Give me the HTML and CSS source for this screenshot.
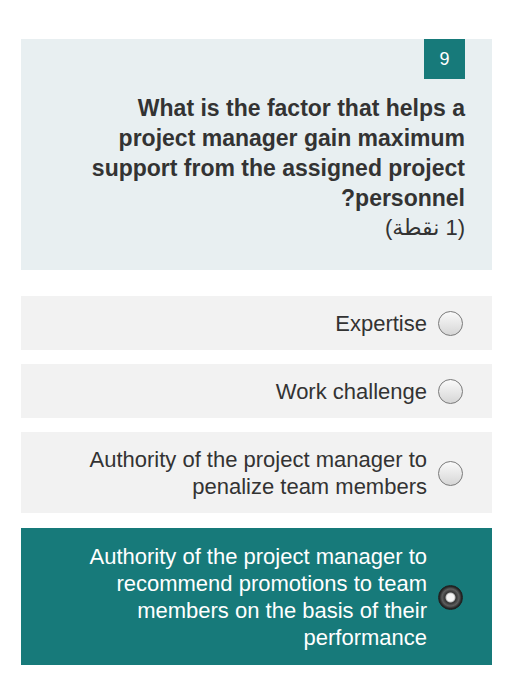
FILE: index.html
```html
<!DOCTYPE html>
<html lang="ar" dir="rtl">
<head>
    <meta charset="UTF-8">
    <meta name="viewport" content="width=device-width, initial-scale=1.0">
    <title>Question 9</title>
    <link rel="stylesheet" href="styles.css">
</head>
<body>
    <div class="quiz">
        <div class="question-card">
            <div class="question-head">
                <span class="question-number">9</span>
            </div>
            <h2 class="question-text">What is the factor that helps a project manager gain maximum support from the assigned project personnel?</h2>
            <div class="question-points">(1 نقطة)</div>
        </div>

        <ul class="options">
            <li class="option">
                <span class="radio"></span>
                <span class="option-text">Expertise</span>
            </li>
            <li class="option">
                <span class="radio"></span>
                <span class="option-text">Work challenge</span>
            </li>
            <li class="option">
                <span class="radio"></span>
                <span class="option-text">Authority of the project manager to penalize team members</span>
            </li>
            <li class="option selected">
                <span class="radio"></span>
                <span class="option-text">Authority of the project manager to recommend promotions to team members on the basis of their performance</span>
            </li>
        </ul>
    </div>
</body>
</html>
```

FILE: styles.css
```css
body {
    font-family: 'Liberation Sans', Arial, sans-serif;
    margin: 0;
    background-color: #fff;
    color: #333;
}
.quiz {
    padding: 39px 22px 20px 21px;
}
.question-card {
    background-color: #e8eff1;
    padding: 0 27px 27px 52px;
}
.question-head {
    display: flex;
}
.question-number {
    display: flex;
    align-items: center;
    justify-content: center;
    width: 41px;
    height: 40px;
    background-color: #177a7a;
    color: #fff;
    font-size: 18px;
}
.question-text {
    margin: 14px 0 0;
    font-size: 23px;
    line-height: 30px;
    font-weight: bold;
    color: #333;
}
.question-points {
    font-family: 'Liberation Sans', 'DejaVu Sans', sans-serif;
    font-size: 22px;
    line-height: 30px;
    color: #333;
}
.options {
    list-style: none;
    margin: 26px 0 0;
    padding: 0;
    display: flex;
    flex-direction: column;
    gap: 14px;
}
.option {
    display: flex;
    align-items: center;
    gap: 11px;
    background-color: #f2f2f2;
    padding: 14px 29px 13px 45px;
    font-size: 22px;
    line-height: 27px;
    color: #333;
}
.option-text {
    flex: 1;
}
.radio {
    flex: none;
    width: 23px;
    height: 23px;
    border: 1.5px solid #7a7a7a;
    border-radius: 50%;
    background: linear-gradient(#fafafa, #d6d6d6);
}
.option.selected {
    margin-top: 1px;
    padding-top: 15px;
    padding-bottom: 14px;
    background-color: #177a7a;
    color: #fff;
}
.option.selected .radio {
    border-color: #1f1f1f;
    background: radial-gradient(circle, #f4f4f4 0 3.5px, #bdbdbd 4.5px, #333 5.5px, #5e5e5e 8.5px, #262626 11px);
}
```
